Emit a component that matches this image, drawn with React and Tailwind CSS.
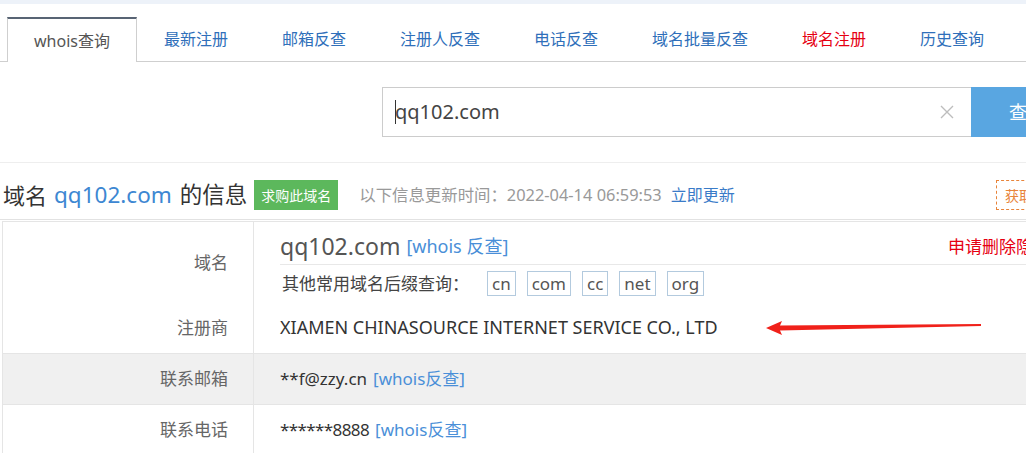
import React from 'react';

const tabs = [
  { label: '最新注册' },
  { label: '邮箱反查' },
  { label: '注册人反查' },
  { label: '电话反查' },
  { label: '域名批量反查' },
  { label: '域名注册', red: true },
  { label: '历史查询' },
];

const suffixes = ['cn', 'com', 'cc', 'net', 'org'];

function Arrow() {
  return (
    <svg width="220" height="20" viewBox="0 0 220 20" className="shrink-0">
      <polygon
        points="2,10 18,3 16,7.5 217,6 217,8 16,12.5 18,17"
        fill="#f0211a"
      />
    </svg>
  );
}

function Row({ label, children, gray, first, className = '' }) {
  return (
    <div className={`flex ${gray ? 'bg-[#f0f0f0]' : 'bg-white'} ${first ? '' : 'border-t border-[#e5e5e5]'} ${className}`}>
      <div className="w-[251px] shrink-0 border-r border-[#e5e5e5] flex items-center justify-end pr-[25px] text-[17px] text-[#666]">
        {label}
      </div>
      <div className="flex-1 pl-[26px] pr-[20px]">{children}</div>
    </div>
  );
}

export default function App() {
  return (
    <div
      className="w-full h-[453px] overflow-hidden bg-white text-[#333]"
      style={{ fontFamily: '"Noto Sans", "Noto Sans CJK SC", sans-serif' }}
    >
      <div className="w-[1100px]">
        <div className="h-[4px] bg-[#edf2f9]" />

        {/* tabs */}
        <div className="flex pt-[13px] pl-[7px] border-b border-[#cfcfcf] h-[58px]">
          <div className="h-[45px] -mb-px bg-white border-t-2 border-t-[#586474] border-x border-x-[#cfcfcf] px-[26px] flex items-center text-[16px] text-[#555]">
            whois查询
          </div>
          {tabs.map((t) => (
            <div
              key={t.label}
              className={`h-[44px] px-[27px] flex items-center text-[16px] ${t.red ? 'text-[#e60012]' : 'text-[#2f6fba]'}`}
            >
              {t.label}
            </div>
          ))}
        </div>

        {/* search */}
        <div className="flex pl-[382px] pt-[25px] pb-[25px] border-b border-[#eeeeee]">
          <div className="w-[589px] h-[50px] border border-[#cccccc] border-r-0 flex items-center pl-[12px] pr-[16px]">
            <span className="w-px h-[24px] bg-[#333] -mr-[1px]" />
            <span className="text-[20px] text-[#444] flex-1">qq102.com</span>
            <svg width="16" height="16" viewBox="0 0 16 16">
              <path d="M2 2 L14 14 M14 2 L2 14" stroke="#bdbdbd" strokeWidth="1.4" />
            </svg>
          </div>
          <div className="w-[110px] h-[50px] bg-[#59a6e1] flex items-center pl-[38px] text-white text-[18px]">
            查询
          </div>
        </div>

        {/* heading */}
        <div className="flex items-center h-[57px] pt-[8px] pl-[3px] border-b border-[#e2e2e2]">
          <span className="text-[22px] text-[#333]">域名</span>
          <span className="text-[22.5px] text-[#3d87d2] ml-[7px]">qq102.com</span>
          <span className="text-[22.5px] text-[#333] ml-[8px]">的信息</span>
          <span className="ml-[7px] h-[30px] px-[7px] bg-[#5cb85c] text-white text-[14px] flex items-center">
            求购此域名
          </span>
          <span className="ml-[21px] text-[16.4px] text-[#999]">以下信息更新时间：2022-04-14 06:59:53</span>
          <span className="ml-[9px] text-[16px] text-[#3a7bc8]">立即更新</span>
          <span className="ml-auto w-[104px] h-[30px] border border-dashed border-[#e8843a] text-[#e8843a] text-[14px] flex items-center pl-[8px]">
            获取联系方式
          </span>
        </div>

        {/* table */}
        <div className="ml-[2px] mt-px border-l border-t border-[#e5e5e5]">
          <Row label="域名" first>
            <div className="pt-[7px]">
              <div className="flex items-center h-[36px] border-b border-[#e8e8e8]">
                <span className="text-[23px] text-[#555]">qq102.com</span>
                <span className="ml-[6px] text-[18px] text-[#4a8fd8]">[whois 反查]</span>
                <span className="ml-auto text-[17px] text-[#e60012] pr-[30px]">申请删除隐私</span>
              </div>
              <div className="flex items-center pt-[6px] pb-[6px]">
                <span className="text-[17px] text-[#444] ml-[2px]">其他常用域名后缀查询：</span>
                <div className="flex gap-[11px] ml-[18px]">
                  {suffixes.map((s) => (
                    <span
                      key={s}
                      className="h-[25px] px-[4px] border border-[#b3cade] flex items-center text-[17px] text-[#555]"
                    >
                      {s}
                    </span>
                  ))}
                </div>
              </div>
            </div>
          </Row>
          <Row label="注册商" first className="h-[50px]">
            <div className="h-full flex items-center">
              <span className="text-[18px] text-[#333]">XIAMEN CHINASOURCE INTERNET SERVICE CO., LTD</span>
              <span className="ml-[46px]">
                <Arrow />
              </span>
            </div>
          </Row>
          <Row label="联系邮箱" gray className="h-[51px]">
            <div className="h-full flex items-center text-[17px]">
              <span className="text-[#333]">**f@zzy.cn</span>
              <span className="ml-[6px] text-[#4a8fd8]">[whois反查]</span>
            </div>
          </Row>
          <Row label="联系电话" className="h-[51px]">
            <div className="h-full flex items-center text-[17px]">
              <span className="text-[#333] tracking-[-0.6px]">******8888</span>
              <span className="ml-[6px] text-[#4a8fd8]">[whois反查]</span>
            </div>
          </Row>
        </div>
      </div>
    </div>
  );
}
